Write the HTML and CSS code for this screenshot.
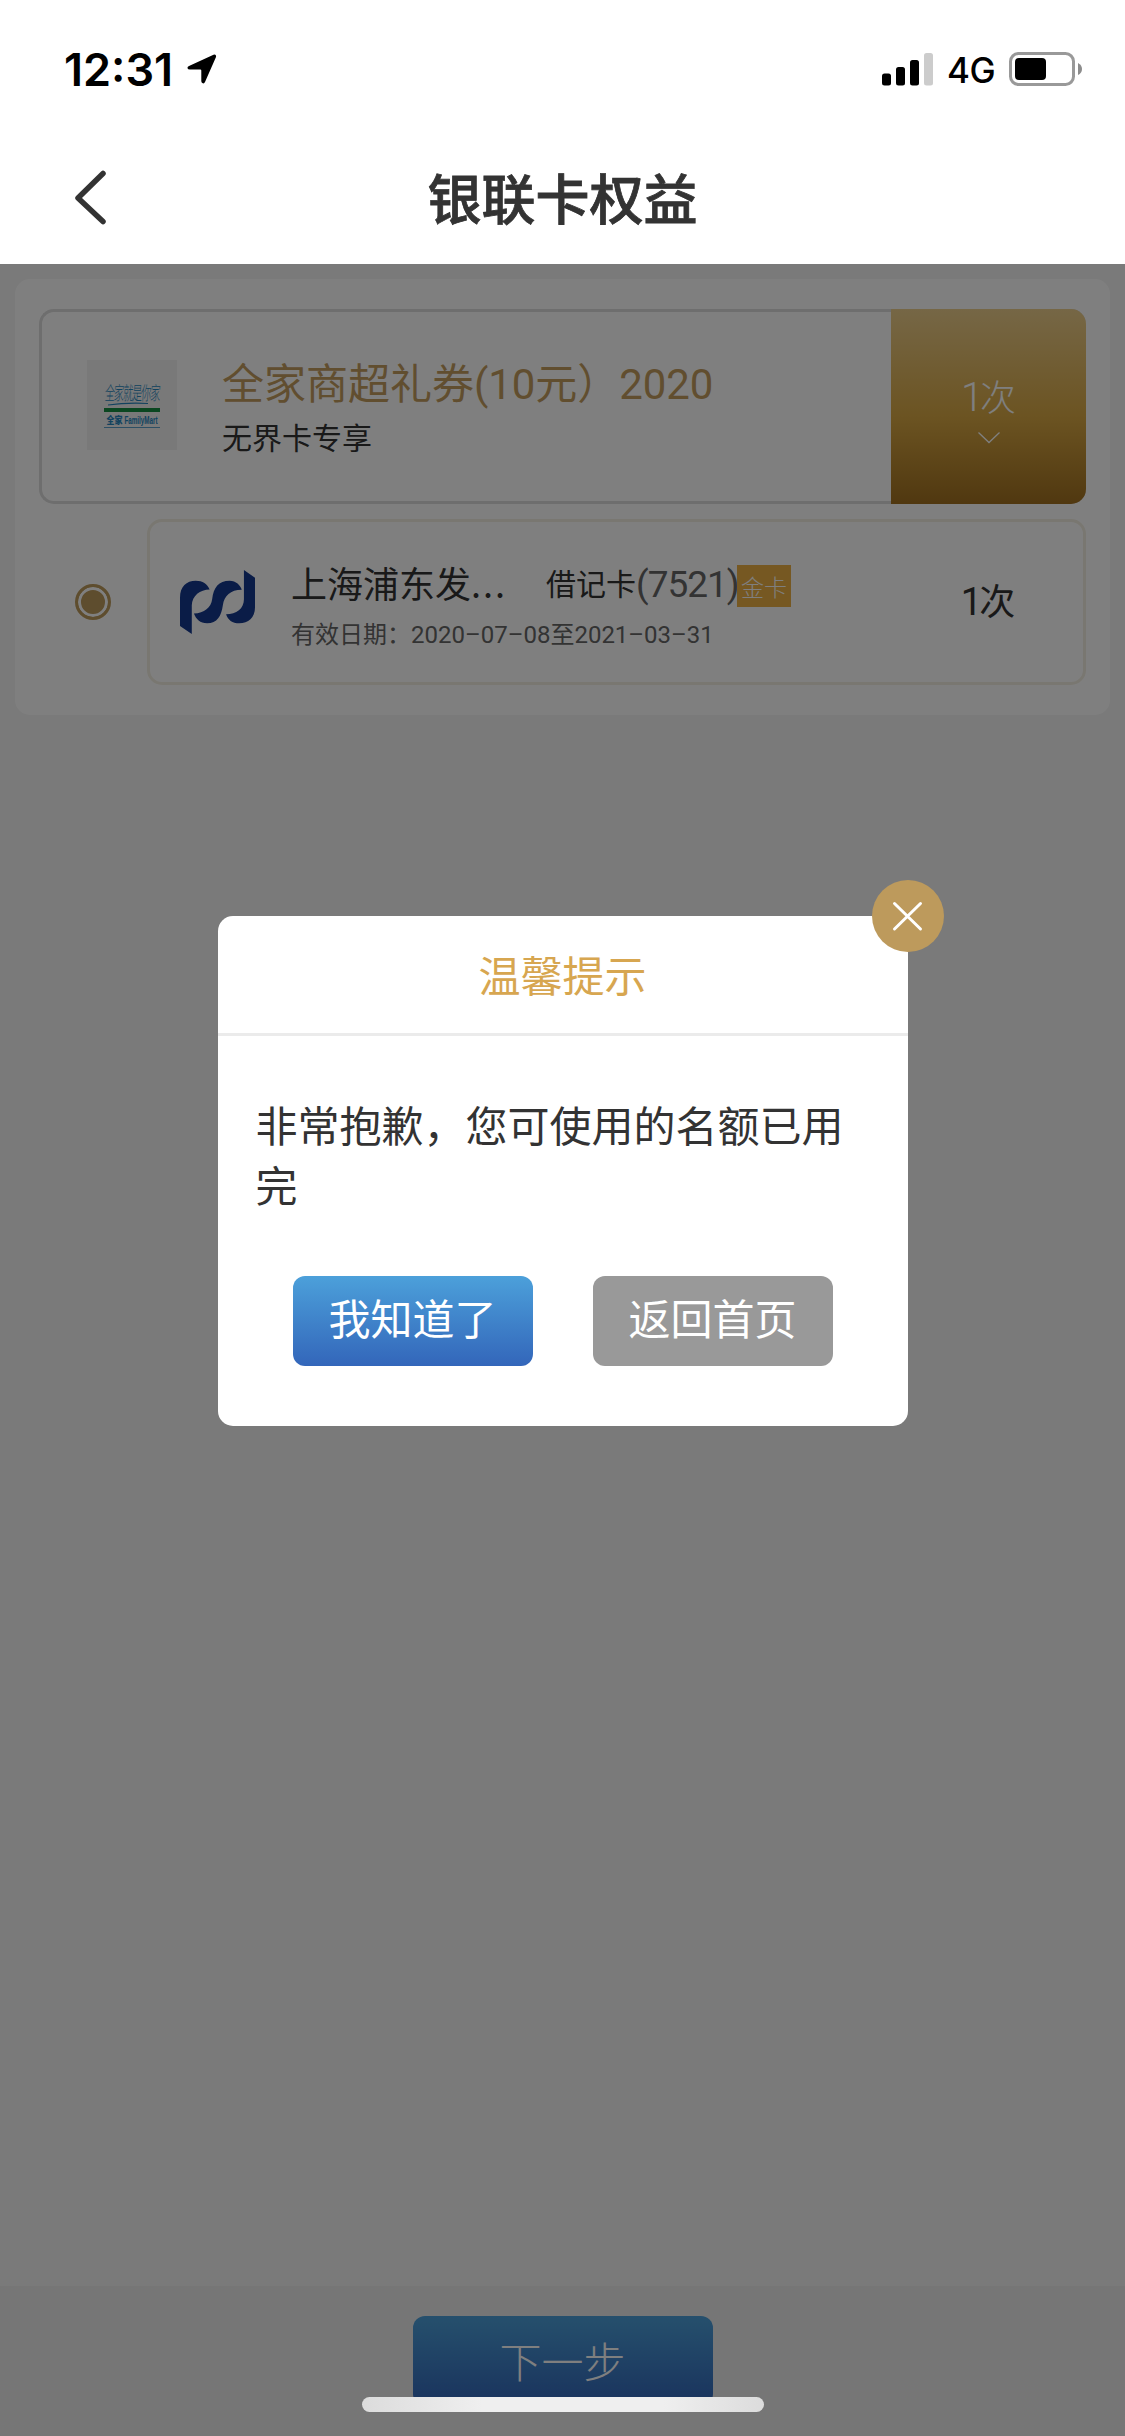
FILE: index.html
```html
<!DOCTYPE html>
<html lang="zh-CN">
<head>
<meta charset="utf-8">
<title>银联卡权益</title>
<link rel="stylesheet" href="styles.css">
</head>
<body>
<div class="app">
  <header class="top">
    <div class="status">
      <span class="time">12:31</span>
      <svg class="locate" width="30" height="31" viewBox="0 0 30 31"><path d="M2 13 26.500 1.700Q29.500 .8 29 4L18 29Q17 31.300 15.300 30Q14.300 29.500 14.300 28V17.500Q14.300 16.500 13.300 16.500H3Q.8 16.500 .4 15Q.6 13.700 2 13Z"/></svg>
      <svg class="signal" width="51" height="33" viewBox="0 0 51 33"><rect y="20.500" width="9" height="12" rx="2.500"/><rect x="14" y="14" width="9" height="18.500" rx="2.500"/><rect x="28" y="7" width="9" height="25.500" rx="2.500"/><rect x="42" width="9" height="32.500" rx="2.500" fill="#ccc"/></svg>
      <span class="net">4G</span>
      <svg class="battery" width="74" height="34" viewBox="0 0 74 34"><rect x="1.500" y="1.500" width="63" height="31" rx="8" fill="none" stroke="#999" stroke-width="3"/><rect x="6" y="6" width="31" height="22" rx="4"/><path d="M69 11Q73 13 73 17T69 23Z" fill="#8c8c8c"/></svg>
    </div>
    <div class="nav">
      <svg class="back" width="34" height="56" viewBox="0 0 34 56"><path d="M29 3.500 4 28 29 51.500" fill="none" stroke="#333" stroke-width="5.500" stroke-linecap="round" stroke-linejoin="round"/></svg>
      <h1>银联卡权益</h1>
    </div>
  </header>

  <main class="content">
    <section class="panel">
      <div class="coupon">
        <div class="brand">
          <span class="slogan">全家就是你家</span>
          <svg class="swoosh" width="56" height="4" viewBox="0 0 56 4"><path d="M4 3Q22 .5 44 1.500" fill="none" stroke="#2585bd" stroke-width="1.200"/></svg>
          <span class="stripe"></span>
          <span class="brand-name"><b>全家</b><i>FamilyMart</i></span>
        </div>
        <div class="coupon-text">
          <div class="coupon-title">全家商超礼券<span class="num">(10</span>元）<span class="num">2020</span></div>
          <div class="coupon-sub">无界卡专享</div>
        </div>
        <div class="quota">
          <span><span class="num">1</span>次</span>
          <svg width="24" height="13" viewBox="0 0 24 13"><path d="M1.500 1.500 12 11.500 22.500 1.500" fill="none" stroke="#fff" stroke-width="1.300"/></svg>
        </div>
      </div>
      <div class="card-row">
        <span class="radio"></span>
        <div class="bank-card">
          <svg class="bank-logo" width="75" height="64" viewBox="504 213 210 191" preserveAspectRatio="none" fill="#14398f"><path d="M504 380V296C504 262 522 245 548 245C568 245 580 255 587 271C560 271 538 290 537 318V404Z"/><path d="M543 343C572 341 591 325 594 300C598 265 612 245 643 245C661 245 673 258 677 272C645 272 628 290 624 318C620 350 608 372 580 372C560 372 549 360 543 343Z"/><path d="M683 213 714 236V325C714 355 695 372 670 372C650 372 638 362 633 345C662 345 683 328 683 300Z"/></svg>
          <div class="bank-text">
            <div class="bank-line"><span class="bank-name">上海浦东发<em>...</em></span><span class="kind">借记卡</span><span class="tail num">(7521)</span><span class="badge">金卡</span></div>
            <div class="valid">有效日期：<span class="num">2020–07–08</span>至<span class="num">2021–03–31</span></div>
          </div>
          <span class="count"><span class="num">1</span>次</span>
        </div>
      </div>
    </section>
    <footer class="footer"><button class="btn next">下一步</button></footer>

    <div class="overlay">
      <div class="dialog">
        <button class="close"><svg width="34" height="33" viewBox="0 0 34 33"><path d="M3.500 3.500 29.500 29M29.500 3.500 3.500 29" stroke="#fff" stroke-width="3" stroke-linecap="round"/></svg></button>
        <h2>温馨提示</h2>
        <p>非常抱歉，您可使用的名额已用完</p>
        <div class="actions">
          <button class="btn">我知道了</button>
          <button class="btn gray">返回首页</button>
        </div>
      </div>
    </div>
    <span class="home-bar"></span>
  </main>
</div>
</body>
</html>
```
FILE: styles.css
```css
* { box-sizing: border-box; }
body { margin: 0; font-family: "Noto Sans CJK SC", sans-serif; color: #333; }
h1, h2, p { margin: 0; font-weight: 400; }
button { border: 0; padding: 0; font: inherit; }
svg { display: block; flex: none; }
.app { width: 1125px; height: 2436px; display: flex; flex-direction: column; overflow: hidden; }
.num { font-family: Roboto, sans-serif; line-height: 1; }

.top { height: 264px; background: #fff; color: #000; }
.status { height: 132px; display: flex; align-items: flex-start; padding: 52px 42px 0 64px; font-family: Inter, sans-serif; }
.time { width: 123px; font-size: 45px; font-weight: 600; line-height: 35px; letter-spacing: 0; }
.locate { margin-top: 1px; }
.signal { margin: 1px 14px 0 auto; }
.net { width: 62px; font-size: 35px; line-height: 37px; letter-spacing: -.5px; font-weight: 450; }
.nav { height: 132px; display: grid; grid-template-columns: 104px 1fr 104px; align-items: center; }
.back { margin-left: 74px; }
.nav h1 { grid-column: 2; text-align: center; font-size: 54px; font-weight: 500; line-height: 80px; color: #333; margin-top: -3px; -webkit-text-stroke: .8px #333; }

.content { flex: 1; position: relative; display: flex; flex-direction: column; background: #f4f4f4; }
.panel { margin: 15px 15px 0; height: 436px; padding: 30px 24px; background: #fff; border-radius: 15px; }
.coupon { height: 195px; display: flex; align-items: center; border: 3px solid #dcdcdc; border-right: 0; border-radius: 15px; padding-left: 45px; }
.brand { width: 90px; height: 90px; margin-bottom: 3px; background: #f2f2f2; display: flex; flex-direction: column; align-items: center; padding-top: 22px; color: #2585bd; }
.slogan { font-size: 10px; font-weight: 300; line-height: 20px; height: 20px; white-space: nowrap; letter-spacing: -.9px; transform: skewX(-4deg) scaleY(1.9); }
.stripe { width: 56px; height: 4px; margin-top: 2px; background: #168f42; flex: none; }
.brand-name { width: 56px; height: 16px; display: flex; align-items: center; justify-content: center; gap: 1px; border-bottom: 1.500px solid #5a9fc8; font-size: 8px; white-space: nowrap; }
.brand-name b { font-weight: 900; transform: scaleY(1.3); }
.brand-name i { font: 700 9px "Liberation Sans", sans-serif; transform: scaleX(.7) scaleY(1.2); width: 34px; display: flex; justify-content: center; }
.coupon-text { flex: 1; padding-left: 45px; }
.coupon-title { color: #c39c5e; font-size: 42px; line-height: 54px; height: 56px; white-space: nowrap; }
.coupon-title .num { letter-spacing: -.1px; }
.coupon-sub { font-size: 30px; line-height: 46px; margin-top: 3px; }
.quota { width: 195px; height: 195px; border-radius: 0 15px 15px 0; background: linear-gradient(#ecce8c, #d8a844 55%, #a17020); color: #fff; display: flex; flex-direction: column; align-items: center; padding-top: 61px; font-size: 36px; font-weight: 300; line-height: 50px; }
.quota .num { font-size: 40px; letter-spacing: -3px; }
.quota svg { margin-top: 11px; }
.card-row { display: flex; align-items: center; margin-top: 15px; height: 166px; }
.radio { width: 36px; height: 36px; margin: 0 36px; border-radius: 50%; border: 3px solid #bd9a5c; background: #bd9a5c; box-shadow: inset 0 0 0 3px #fff; }
.bank-card { flex: 1; height: 166px; border: 3px solid #f3efe2; border-radius: 15px; display: flex; align-items: center; padding-left: 30px; }
.bank-text { padding-left: 36px; flex: 1; }
.bank-line { display: flex; align-items: center; height: 50px; font-size: 36px; line-height: 50px; white-space: nowrap; }
.bank-name { width: 255px; }
.bank-name em { font-style: normal; letter-spacing: 2px; }
.kind { font-size: 30px; }
.tail { color: #666; letter-spacing: -1px; width: 101px; font-size: 37px; padding-top: 4px; }
.badge { width: 54px; height: 42px; margin-top: 8px; background: #edb044; color: #fff; font-size: 23px; line-height: 43px; text-align: center; font-weight: 300; }
.valid { font-size: 24px; line-height: 36px; height: 36px; color: #666; margin: 8px 0 -4px; white-space: nowrap; }
.valid .num { letter-spacing: 0; }
.count { width: 190px; font-size: 36px; line-height: 48px; height: 50px; margin-top: -5px; text-align: center; }
.count .num { font-size: 38px; letter-spacing: -3px; }

.footer { margin-top: auto; height: 150px; padding-top: 30px; background: #ececec; display: flex; justify-content: center; align-items: flex-start; }
.btn { width: 240px; height: 90px; border-radius: 12px; background: linear-gradient(#4ca0da, #3366ba); color: #fff; font-size: 42px; line-height: 81px; padding-bottom: 9px; }
.btn.gray { background: #999; }
.btn.next { width: 300px; font-weight: 300; padding-bottom: 4px; }

.overlay { position: absolute; inset: 0; background: rgba(0, 0, 0, .5); display: flex; justify-content: center; align-items: flex-start; padding-top: 652px; }
.dialog { position: relative; width: 690px; height: 510px; background: #fff; border-radius: 15px; }
.dialog h2 { height: 120px; border-bottom: 3px solid #ebebeb; text-align: center; font-size: 42px; line-height: 116px; color: #d7a650; }
.dialog p { padding: 58px 37px 0 38px; height: 240px; font-size: 42px; line-height: 60px; }
.actions { display: flex; justify-content: center; gap: 60px; }
.close { position: absolute; top: -36px; right: -36px; width: 72px; height: 72px; border-radius: 50%; background: #bd9a5c; display: flex; align-items: center; justify-content: center; }
.home-bar { position: absolute; left: 362px; bottom: 24px; width: 402px; height: 15px; border-radius: 8px; background: linear-gradient(90deg, #dcdcdc, #efefef 30%, #efefef 75%, #dcdcdc); }
```
